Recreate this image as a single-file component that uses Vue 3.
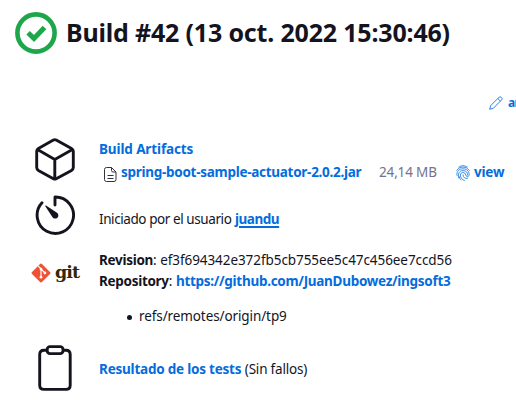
<script setup>
const artifact = { name: 'spring-boot-sample-actuator-2.0.2.jar', size: '24,14 MB' }
const revision = 'ef3f694342e372fb5cb755ee5c47c456ee7ccd56'
const repository = 'https://github.com/JuanDubowez/ingsoft3'
</script>

<template>
  <main class="page">
    <header class="heading">
      <svg class="status" viewBox="0 0 42 42" fill="none" stroke="#1ea64b">
        <circle cx="21" cy="21" r="18.6" stroke-width="4.6" />
        <path d="M13.1 20.8l5.9 5.7 10.5-10.9" stroke-width="5" />
      </svg>
      <h1>Build #42 (13 oct. 2022 15:30:46)</h1>
    </header>

    <div class="description">
      <a href="#">
        <svg class="pencil" viewBox="0 0 14 14" fill="none" stroke="currentColor" stroke-width=".85" stroke-linejoin="round">
          <path d="M.7 13.3l1-3.7L10.2 1.1c1.2-1.1 3.7 1.2 2.6 2.6L4.3 12.3zM8.8 2.5l2.7 2.7" />
        </svg>
        <span>añadir descripción</span>
      </a>
    </div>

    <section class="row artifacts">
      <div class="icon">
        <svg width="40" height="43" viewBox="0 0 40 43" fill="none" stroke="#14141f" stroke-width="2.9" stroke-linejoin="round" stroke-linecap="round">
          <path d="M18.4 2.1q1.4-.8 2.8 0L36.5 10.4q1.8 1 1.8 2.8v16.4q0 1.8-1.8 2.8L21.2 40.7q-1.4.8-2.8 0L3.4 32.4q-1.7-1-1.7-2.8V13.2q0-1.8 1.7-2.8zM2.5 11.6l17.3 9.8 17.6-9.8M19.8 21.4v19.4" />
        </svg>
      </div>
      <div class="body">
        <a href="#" class="caption">Build Artifacts</a>
        <div class="file">
          <svg class="doc" viewBox="0 0 13 15" fill="none" stroke="#333340" stroke-width="1">
            <path d="M7.5 .5H2.5Q.5 .5 .5 2.5v10q0 2 2 2h7.5q2 0 2-2V5zM7.5 .5V3.5q0 1.5 1.5 1.5H12M3.5 8.5h6M3.5 11.5h6" />
          </svg>
          <a href="#" class="name">{{ artifact.name }}</a>
          <span class="size">{{ artifact.size }}</span>
          <a href="#" class="view">
            <svg class="print" viewBox="0 0 14 16" fill="none" stroke="currentColor" stroke-width=".75" stroke-linecap="round">
              <path d="M2.8 2Q7-.8 11.2 2M.6 5.3Q3 2 7 2t6.4 3.3M1 10.4C.2 6.3 3 3.8 7 3.8s6.8 3 6 6.6c-.4 1.7-2.9 1.5-3.2-.3C9.3 6.6 4.6 6.7 4.4 10c0 2.5 1.6 4.8 4 5.5M2.7 12.9C1.4 8.5 3.6 5.6 7 5.6s5 2.2 4.6 4.4M5 15c-1.1-1.2-1.7-2.4-1.9-3.7M7 9.8c0 2.7 2 4.1 4.6 3.5" />
            </svg>
            <span>view</span>
          </a>
        </div>
      </div>
    </section>

    <section class="row cause">
      <div class="icon">
        <svg width="40" height="41" viewBox="0 0 40 41">
          <path d="M20 10V2a18.2 18.2 0 1 1-13 5.8" fill="none" stroke="#14141f" stroke-width="2.9" stroke-linecap="round" stroke-linejoin="round" />
          <path d="M11 10.5l11 7.3a3.2 3.2 0 1 1-4.5 4.4L10.3 11.2q-.2-1 .7-.7z" fill="#14141f" />
        </svg>
      </div>
      <div class="body"><span class="user-line">Iniciado por el usuario</span> <a href="#" class="user">juandu</a></div>
    </section>

    <section class="row git">
      <div class="icon logo">
        <svg width="20" height="20" viewBox="0 0 20 20">
          <rect x="3" y="3" width="14" height="14" rx="1" transform="rotate(45 10 10)" fill="#f05033" />
          <path d="M7.1 2.9L10 5.8v8.4M10 6l4 4" fill="none" stroke="#fff" stroke-width="1.1" />
          <g fill="#fff"><circle cx="10" cy="6.1" r="1.4" /><circle cx="10" cy="14.2" r="1.4" /><circle cx="13.9" cy="10" r="1.4" /></g>
        </svg>
        <span>git</span>
      </div>
      <div class="body">
        <div class="line revision"><b>Revision</b>: <span>{{ revision }}</span></div>
        <div class="line repo"><b>Repository</b>: <a href="#">{{ repository }}</a></div>
        <ul><li><span>refs/remotes/origin/tp9</span></li></ul>
      </div>
    </section>

    <section class="row tests">
      <div class="icon">
        <svg width="34" height="46" viewBox="0 0 34 46" fill="none" stroke="#14141f" stroke-width="2.9">
          <path d="M9 5.2H6Q1.7 5.2 1.7 9.4v30.8Q1.7 44.4 6 44.4h22q4.2 0 4.2-4.2V9.4q0-4.2-4.2-4.2h-3" />
          <rect x="9.2" y="1.6" width="15.8" height="7" rx="2.8" />
        </svg>
      </div>
      <div class="body"><a href="#" class="result">Resultado de los tests</a> <span class="fails">(Sin fallos)</span></div>
    </section>
  </main>
</template>

<style>
body { background: #fff; overflow: hidden; }
</style>

<style scoped>
.page { width: 516px; height: 413px; overflow: hidden; color: #14141f; font: 13.5px/21px "Noto Sans", sans-serif; white-space: nowrap; }
a { color: #046cdc; font-weight: 700; text-decoration: none; }
.heading { display: flex; align-items: center; gap: 9px; height: 66px; padding-left: 15px; }
.status { width: 42px; height: 42px; }
h1 { margin: 0; padding-bottom: 2px; font-size: 25px; line-height: 34px; letter-spacing: -.18px; }
.description { display: flex; height: 69px; padding-left: 489px; align-items: center; }
.description a { display: flex; align-items: center; gap: 5px; font-size: 12px; letter-spacing: -.6px; padding-top: 4px; }
.pencil { width: 14px; height: 14px; flex: none; }
.row { display: flex; }
.icon { flex: none; display: flex; }
.artifacts { height: 57px; }
.artifacts .icon { padding: 3px 0 0 35px; width: 64px; }
.artifacts .body { padding-top: 4px; }
.caption { display: block; height: 22px; letter-spacing: -.12px; }
.file { display: flex; align-items: center; height: 22px; padding-left: 5px; }
.doc { width: 13px; height: 15px; margin-right: 4px; transform: translateY(2px); }
.name { width: 240px; letter-spacing: -.28px; }
.size { width: 58px; color: #73738c; margin-left: 18px; letter-spacing: -.15px; }
.view { display: flex; align-items: center; gap: 4px; margin-left: 19px; letter-spacing: -.2px; }
.print { width: 14px; height: 16px; transform: translateY(1px); }
.cause { height: 57px; }
.cause .icon { padding: 3px 0 0 35px; width: 64px; }
.cause .body { padding-top: 17px; }
.user-line { letter-spacing: -.42px; }
.user { letter-spacing: -.45px; text-decoration: underline; text-decoration-thickness: 2px; text-underline-offset: 2px; }
.git { height: 95px; }
.git .body { padding-top: 1px; }
.git .logo { width: 68px; padding: 14px 0 0 31px; gap: 4px; color: #362701; }
.logo span { font: 700 17.5px/18px "DejaVu Serif", serif; letter-spacing: -1px; }
.revision b, .repo b { letter-spacing: -.3px; }
.revision span { letter-spacing: -.07px; }
.repo a { letter-spacing: -.29px; }
ul { margin: 14px 0 0; padding-left: 28px; list-style: none; }
li { display: flex; align-items: center; gap: 7px; letter-spacing: -.1px; }
li::before { content: ""; width: 5px; height: 5px; border-radius: 50%; background: #14141f; margin-top: 1px; }
.tests .icon { width: 61px; padding: 1px 0 0 38px; }
.tests .body { padding-top: 15px; }
.result { letter-spacing: -.22px; }
.fails { letter-spacing: -.2px; }
</style>
